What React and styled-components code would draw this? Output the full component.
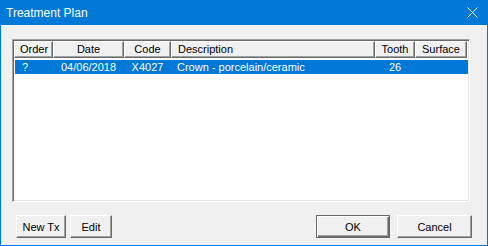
import React from "react";
import styled, { createGlobalStyle } from "styled-components";

const GlobalStyle = createGlobalStyle`
  html, body {
    margin: 0;
    padding: 0;
    background: #f0f0f0;
  }
  body {
    font-family: "Liberation Sans", Arial, sans-serif;
    font-size: 11px;
  }
`;

const Window = styled.div`
  width: 488px;
  height: 246px;
  box-sizing: border-box;
  border: 1px solid #0078d7;
  border-top: none;
  background: #f0f0f0;
  display: flex;
  flex-direction: column;
`;

const TitleBar = styled.div`
  height: 25px;
  margin: 0 -1px;
  background: #0078d7;
  color: #fff;
  display: flex;
  align-items: center;
  justify-content: space-between;
  padding: 0 10px 0 6px;
  font-size: 12px;
  flex-shrink: 0;
`;

const Body = styled.div`
  flex: 1;
  display: flex;
  flex-direction: column;
  padding: 14px 17px 8px 11px;
`;

const ListBox = styled.div`
  height: 163px;
  box-sizing: border-box;
  background: #fff;
  border: 1px solid;
  border-color: #a0a0a0 #fff #fff #a0a0a0;
  box-shadow: inset 1px 1px 0 #696969, inset -1px -1px 0 #e3e3e3;
  padding: 1px;
`;

const cols = [
  { w: 39, align: "left", pad: "5px" },
  { w: 71, align: "center" },
  { w: 47, align: "center" },
  { w: 204, align: "left", pad: "6px" },
  { w: 40, align: "center" },
  { w: 52, align: "center" },
];

const HeaderRow = styled.div`
  display: flex;
  height: 17px;
`;

const HeaderCell = styled.div`
  width: ${(p) => p.$w}px;
  box-sizing: border-box;
  background: #f0f0f0;
  border: 1px solid;
  border-color: #fff #696969 #696969 #fff;
  box-shadow: inset -1px -1px 0 #a0a0a0;
  text-align: ${(p) => p.$align};
  padding-left: ${(p) => p.$pad || "0"};
  line-height: 14px;
  color: #000;
  white-space: nowrap;
`;

const Row = styled.div`
  display: flex;
  height: 14px;
  margin: 2px 0 0 1px;
  background: ${(p) => (p.$selected ? "#0078d7" : "transparent")};
  color: ${(p) => (p.$selected ? "#fff" : "#000")};
`;

const Cell = styled.div`
  width: ${(p) => p.$w}px;
  box-sizing: border-box;
  text-align: ${(p) => p.$align};
  padding-left: ${(p) => p.$pad || "0"};
  line-height: 14px;
  white-space: nowrap;
`;

const ButtonBar = styled.div`
  display: flex;
  align-items: center;
  margin-top: 13px;
  padding-left: 4px;
  margin-right: -2px;
`;

const Button = styled.button`
  width: ${(p) => p.$w}px;
  height: 23px;
  box-sizing: border-box;
  margin: 0 ${(p) => p.$gap || 0}px 0 0;
  font-family: "Liberation Sans", Arial, sans-serif;
  font-size: 11px;
  color: #000;
  background: #f0f0f0;
  padding: 0;
  border: 1px solid;
  border-color: ${(p) =>
    p.$default ? "#696969" : "#fff #696969 #696969 #fff"};
  box-shadow: ${(p) =>
    p.$default
      ? "inset 1px 1px 0 #fff, inset -1px -1px 0 #696969, inset -2px -2px 0 #a0a0a0"
      : "inset -1px -1px 0 #a0a0a0"};
`;

const Spacer = styled.div`
  flex: 1;
`;

const headers = ["Order", "Date", "Code", "Description", "Tooth", "Surface"];
const rows = [["?", "04/06/2018", "X4027", "Crown - porcelain/ceramic", "26", ""]];

export default function App() {
  return (
    <>
      <GlobalStyle />
      <Window>
        <TitleBar>
          <span>Treatment Plan</span>
          <svg width="11" height="11" viewBox="0 0 11 11">
            <path d="M0.5 0.5 L10.5 10.5 M10.5 0.5 L0.5 10.5" stroke="#fff" strokeWidth="1" />
          </svg>
        </TitleBar>
        <Body>
          <ListBox>
            <HeaderRow>
              {headers.map((h, i) => (
                <HeaderCell key={h} $w={cols[i].w} $align={cols[i].align} $pad={cols[i].pad}>
                  {h}
                </HeaderCell>
              ))}
            </HeaderRow>
            {rows.map((r, ri) => (
              <Row key={ri} $selected>
                {r.map((v, i) => (
                  <Cell
                    key={i}
                    $w={i === 0 ? cols[i].w - 1 : cols[i].w}
                    $align={cols[i].align}
                    $pad={i === 0 ? "7px" : cols[i].pad}
                  >
                    {v}
                  </Cell>
                ))}
              </Row>
            ))}
          </ListBox>
          <ButtonBar>
            <Button $w={50} $gap={4}>New Tx</Button>
            <Button $w={42}>Edit</Button>
            <Spacer />
            <Button $w={74} $gap={7} $default>OK</Button>
            <Button $w={75}>Cancel</Button>
          </ButtonBar>
        </Body>
      </Window>
    </>
  );
}
